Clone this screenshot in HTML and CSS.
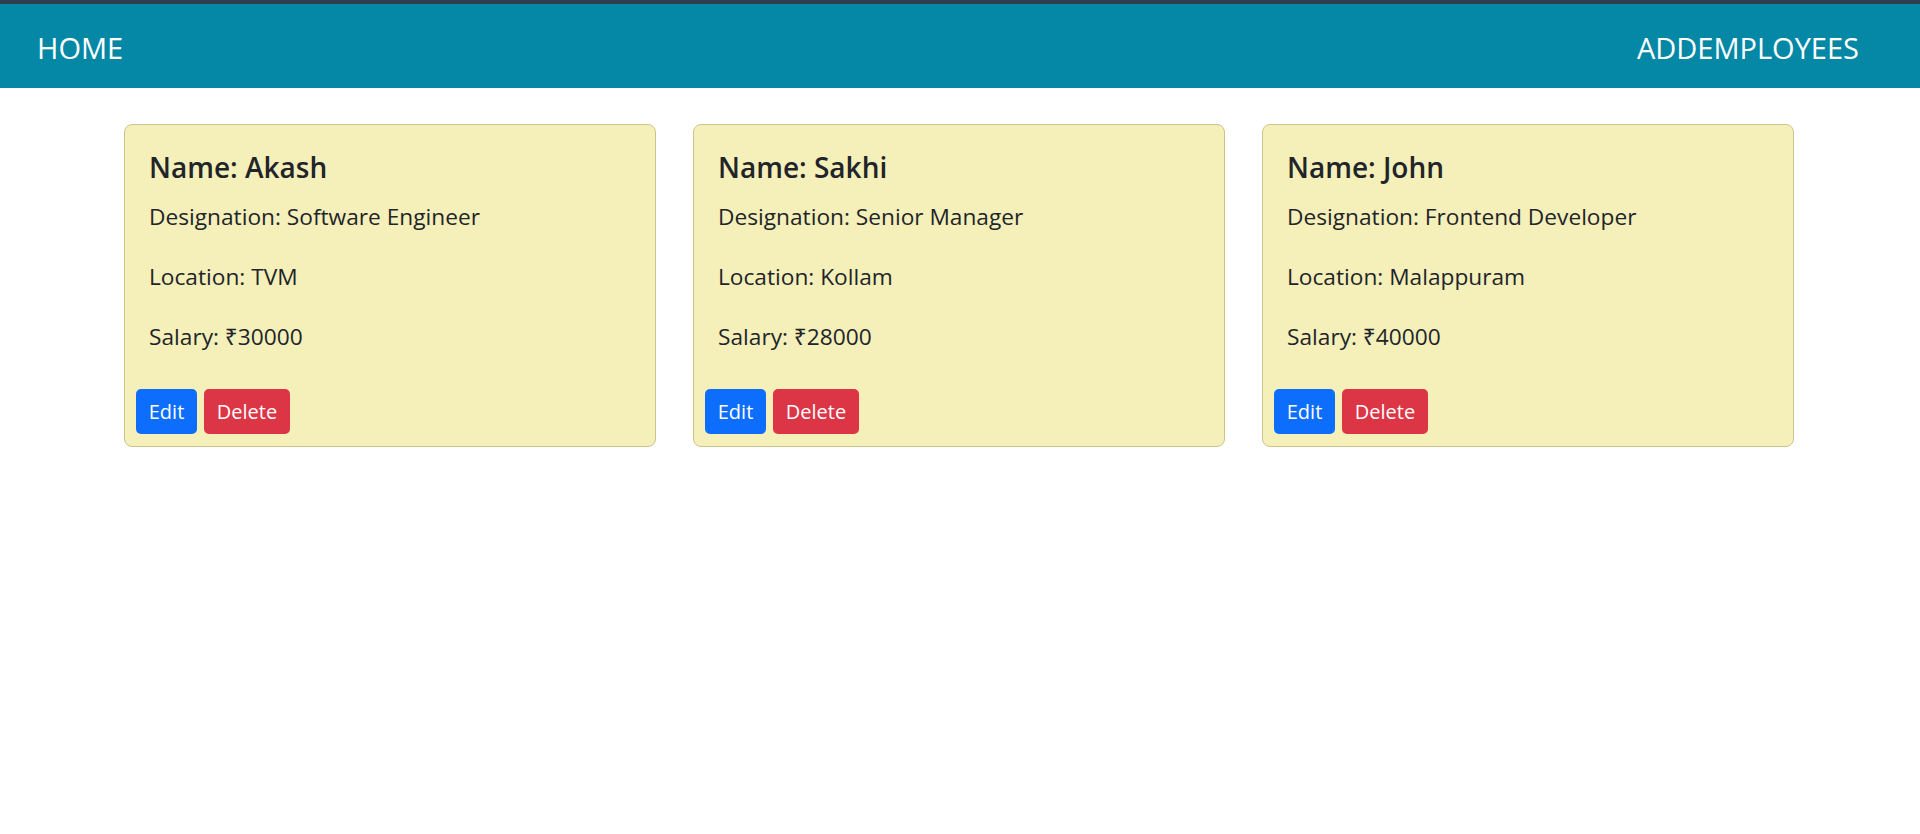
FILE: index.html
```html
<!DOCTYPE html>
<html lang="en">
<head>
<meta charset="utf-8">
<title>Employees</title>
<link rel="stylesheet" href="styles.css">
</head>
<body>
<div class="topstrip"></div>
<nav class="navbar">
  <a class="nav-link" href="#">HOME</a>
  <a class="nav-link" href="#">ADDEMPLOYEES</a>
</nav>
<main class="cards">
  <div class="card">
    <div class="card-body">
      <h5 class="card-title">Name: Akash</h5>
      <p class="card-text">Designation: Software Engineer</p>
      <p class="card-text">Location: TVM</p>
      <p class="card-text">Salary: ₹30000</p>
    </div>
    <div class="card-actions">
      <button class="btn btn-edit">Edit</button>
      <button class="btn btn-delete">Delete</button>
    </div>
  </div>
  <div class="card">
    <div class="card-body">
      <h5 class="card-title">Name: Sakhi</h5>
      <p class="card-text">Designation: Senior Manager</p>
      <p class="card-text">Location: Kollam</p>
      <p class="card-text">Salary: ₹28000</p>
    </div>
    <div class="card-actions">
      <button class="btn btn-edit">Edit</button>
      <button class="btn btn-delete">Delete</button>
    </div>
  </div>
  <div class="card">
    <div class="card-body">
      <h5 class="card-title">Name: John</h5>
      <p class="card-text">Designation: Frontend Developer</p>
      <p class="card-text">Location: Malappuram</p>
      <p class="card-text">Salary: ₹40000</p>
    </div>
    <div class="card-actions">
      <button class="btn btn-edit">Edit</button>
      <button class="btn btn-delete">Delete</button>
    </div>
  </div>
</main>
</body>
</html>
```
FILE: styles.css
```css
* { box-sizing: border-box; }
html, body { margin: 0; padding: 0; }
body {
  font-family: "Open Sans", "Noto Sans", "DejaVu Sans", sans-serif;
  color: #212529;
  background: #ffffff;
  width: 1920px;
  height: 834px;
  overflow: hidden;
}
.topstrip {
  height: 4px;
  background: #2f3e4e;
}
.navbar {
  height: 84px;
  background: #0587a6;
  display: flex;
  align-items: center;
  justify-content: space-between;
  padding: 0 61px 0 37px;
}
.nav-link {
  color: #ffffff;
  text-decoration: none;
  font-size: 29px;
  line-height: 36px;
  padding-top: 4px;
}
.cards {
  display: flex;
  gap: 37px;
  padding: 36px 124px 0 124px;
}
.card {
  width: 532px;
  background: #f5efb9;
  border: 1px solid #cdc38d;
  border-radius: 8px;
  display: flex;
  flex-direction: column;
}
.card-body {
  padding: 24px 24px 0 24px;
}
.card-title {
  margin: 0 0 14px 0;
  font-size: 28px;
  font-weight: 600;
  line-height: 36px;
}
.card-text {
  margin: 0 0 24px 0;
  font-size: 22.7px;
  line-height: 36px;
}
.card-actions {
  display: flex;
  gap: 7px;
  padding: 10px 11px 12px 11px;
}
.btn {
  height: 45px;
  border: none;
  border-radius: 5px;
  color: #ffffff;
  font-family: inherit;
  font-size: 20px;
  padding: 0;
  text-align: center;
}
.btn-edit { width: 61px; background: #0d6efd; }
.btn-delete { width: 86px; background: #dc3545; }
```
